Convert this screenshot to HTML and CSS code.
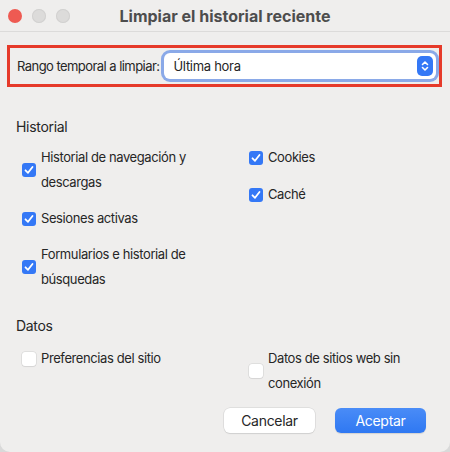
FILE: index.html
```html
<!DOCTYPE html>
<html lang="es">
  <head>
    <meta charset="UTF-8" />
    <title>Limpiar el historial reciente</title>
    <link rel="stylesheet" href="styles.css">
  </head>
  <body>
    <div class="window">
      <div class="titlebar">
        <div class="lights">
          <span class="light red"></span>
          <span class="light grey"></span>
          <span class="light grey"></span>
        </div>
        <div class="title">Limpiar el historial reciente</div>
      </div>

      <!-- Rango temporal -->
      <div class="range">
        <label class="range-label">Rango temporal a limpiar:</label>
        <div class="select">
          <span>Última hora</span>
          <span class="stepper">
            <svg width="10" height="14" viewBox="0 0 10 14">
              <path d="M2.5 5.5 L5 3 L7.5 5.5" fill="none" stroke="#fff" stroke-width="1.6" stroke-linecap="round" stroke-linejoin="round"/>
              <path d="M2.5 8.5 L5 11 L7.5 8.5" fill="none" stroke="#fff" stroke-width="1.6" stroke-linecap="round" stroke-linejoin="round"/>
            </svg>
          </span>
        </div>
      </div>

      <h2 class="section">Historial</h2>
      <div class="options">
        <div class="col">
          <div class="opt"><span class="box on"></span><span class="txt">Historial de navegación y descargas</span></div>
          <div class="opt"><span class="box on"></span><span class="txt">Sesiones activas</span></div>
          <div class="opt"><span class="box on"></span><span class="txt">Formularios e historial de búsquedas</span></div>
        </div>
        <div class="col right">
          <div class="opt"><span class="box on"></span><span class="txt">Cookies</span></div>
          <div class="opt"><span class="box on"></span><span class="txt">Caché</span></div>
        </div>
      </div>

      <h2 class="section datos">Datos</h2>
      <div class="options datos-opts">
        <div class="col">
          <div class="opt"><span class="box"></span><span class="txt">Preferencias del sitio</span></div>
        </div>
        <div class="col right">
          <div class="opt"><span class="box"></span><span class="txt">Datos de sitios web sin conexión</span></div>
        </div>
      </div>

      <div class="buttons">
        <button class="btn">Cancelar</button>
        <button class="btn primary">Aceptar</button>
      </div>
    </div>
  </body>
</html>
```

FILE: styles.css
```css
body {
  margin: 0;
  background-color: #d9d9d9;
  font-family: Inter, "Noto Sans", sans-serif;
  color: #262626;
}
.window {
  width: 450px;
  height: 452px;
  background-color: #efeeed;
  border-radius: 0 0 10px 10px;
  box-sizing: border-box;
  overflow: hidden;
}
.titlebar {
  height: 31px;
  border-bottom: 1px solid #dcdbda;
  display: flex;
  align-items: center;
  position: relative;
  background-color: #efeeed;
}
.lights {
  display: flex;
  gap: 10px;
  padding-left: 8px;
}
.light {
  width: 14px;
  height: 14px;
  border-radius: 50%;
}
.light.red {
  background-color: #ee5a52;
}
.light.grey {
  background-color: #dcdbda;
  box-shadow: inset 0 0 0 1px #d2d1d0;
}
.title {
  position: absolute;
  left: 0;
  right: 0;
  text-align: center;
  font-size: 16px;
  font-weight: 700;
  color: #4d4d4d;
}
.range {
  margin: 13px 8px 0 7px;
  height: 42px;
  border: 3px solid #e63a2a;
  box-sizing: border-box;
  display: flex;
  align-items: center;
  padding: 0 3px 0 7px;
  gap: 4px;
}
.range-label {
  font-size: 13px;
  letter-spacing: -0.55px;
  color: #262626;
}
.select {
  flex: 1;
  height: 26px;
  background: #fff;
  border-radius: 6px;
  box-shadow: 0 0 0 3px #8aa9e8;
  display: flex;
  align-items: center;
  justify-content: space-between;
  padding: 0 3px 0 10px;
  font-size: 13px;
  letter-spacing: -0.3px;
}
.stepper {
  width: 16px;
  height: 20px;
  border-radius: 5px;
  background-color: #3478f6;
  display: flex;
  align-items: center;
  justify-content: center;
}
.section {
  margin: 31px 0 0 16px;
  font-size: 14px;
  font-weight: 400;
  letter-spacing: -0.3px;
  color: #262626;
  line-height: 17px;
}
.section.datos {
  margin-top: 25px;
}
.options {
  display: flex;
  padding-left: 22px;
  margin-top: 10px;
}
.options.datos-opts {
  margin-top: 12px;
}
.col {
  width: 227px;
  display: flex;
  flex-direction: column;
  gap: 11px;
}
.col.right {
  width: 180px;
  gap: 12px;
}
.opt {
  display: flex;
  align-items: center;
  gap: 5px;
  font-size: 13px;
  letter-spacing: -0.4px;
  line-height: 25px;
}
.txt {
  max-width: 150px;
}
.right .txt {
  max-width: 160px;
}
.box {
  width: 14px;
  height: 14px;
  border-radius: 3px;
  background: #fff;
  box-shadow: 0 0 0 0.5px #cfcfcf, 0 1px 1px rgba(0, 0, 0, 0.08);
  flex-shrink: 0;
}
.box.on {
  background: #3478f6 url("data:image/svg+xml,%3Csvg xmlns='http://www.w3.org/2000/svg' width='14' height='14'%3E%3Cpath d='M3.5 7.3 L6 9.8 L10.5 4' fill='none' stroke='white' stroke-width='1.8' stroke-linecap='round' stroke-linejoin='round'/%3E%3C/svg%3E") no-repeat center;
  box-shadow: none;
}
.buttons {
  display: flex;
  justify-content: flex-end;
  gap: 20px;
  padding-right: 24px;
  margin-top: 12px;
}
.btn {
  width: 91px;
  height: 25px;
  border: none;
  border-radius: 6px;
  background: #fff;
  font-family: Inter, "Noto Sans", sans-serif;
  font-size: 14px;
  letter-spacing: -0.3px;
  color: #262626;
  box-shadow: 0 0 0 0.5px #d0d0d0, 0 1px 1px rgba(0, 0, 0, 0.12);
}
.btn.primary {
  background: linear-gradient(#4a8cf7, #2f78f2);
  color: #fff;
  box-shadow: 0 1px 1px rgba(0, 0, 0, 0.12);
}
```
